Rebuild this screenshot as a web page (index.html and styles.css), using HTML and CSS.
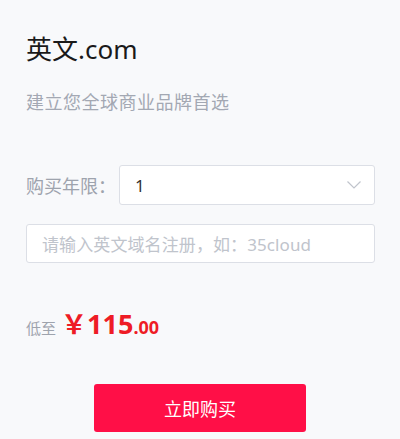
FILE: index.html
```html
<!DOCTYPE html>
<html lang="zh">
<head>
<meta charset="utf-8">
<title>英文.com</title>
<link rel="stylesheet" href="styles.css">
</head>
<body>
<div class="card">
  <h1 class="title">英文.com</h1>
  <p class="subtitle">建立您全球商业品牌首选</p>
  <div class="row">
    <span class="label">购买年限：</span>
    <div class="select">
      <span class="value">1</span>
      <svg class="chev" width="14" height="8" viewBox="0 0 14 8"><path d="M0.5 0.5 L7 7 L13.5 0.5" fill="none" stroke="#c0c4cc" stroke-width="1.2"/></svg>
    </div>
  </div>
  <div class="input"><span class="placeholder">请输入英文域名注册，如：35cloud</span></div>
  <div class="price">
    <span class="low">低至</span>
    <span class="yen">￥</span><span class="int">115</span><span class="dec">.00</span>
  </div>
  <div class="actions"><button class="buy">立即购买</button></div>
</div>
</body>
</html>
```
FILE: styles.css
```css
html, body {
  margin: 0;
  padding: 0;
  background: #f8f9fb;
}
body {
  width: 400px;
  height: 439px;
  overflow: hidden;
  font-family: "Noto Sans", "Noto Sans CJK SC", sans-serif;
}
.card {
  padding: 31px 25px 0 26px;
}
.title {
  margin: 0;
  font-size: 26px;
  line-height: 36px;
  font-weight: 400;
  color: #1a1a1a;
}
.subtitle {
  margin: 22px 0 0;
  font-size: 18px;
  line-height: 26px;
  color: #a3a8b3;
  letter-spacing: 0.5px;
}
.row {
  margin-top: 50px;
  display: flex;
  align-items: center;
}
.label {
  width: 93px;
  font-size: 18px;
  color: #9ea3ad;
  white-space: nowrap;
}
.select {
  flex: 1;
  height: 40px;
  box-sizing: border-box;
  border: 1px solid #dcdfe6;
  border-radius: 3px;
  background: #fff;
  display: flex;
  align-items: center;
  justify-content: space-between;
  padding: 0 13px 0 15px;
}
.value {
  font-size: 17px;
  color: #333;
}
.chev {
  display: block;
}
.input {
  margin-top: 19px;
  height: 39px;
  box-sizing: border-box;
  border: 1px solid #dcdfe6;
  border-radius: 3px;
  background: #fff;
  display: flex;
  align-items: center;
  padding-left: 15px;
}
.placeholder {
  font-size: 17px;
  color: #c0c4cc;
  white-space: nowrap;
  letter-spacing: 0.1px;
}
.price {
  margin-top: 44px;
  height: 34px;
  display: flex;
  align-items: baseline;
  color: #ee1c25;
  font-weight: 700;
  line-height: 34px;
}
.low {
  font-size: 15px;
  font-weight: 400;
  color: #9ea3ad;
  margin-right: 5px;
}
.yen {
  font-size: 26px;
}
.int {
  font-size: 27px;
}
.dec {
  font-size: 18px;
}
.actions {
  margin-top: 43px;
  display: flex;
  justify-content: center;
  margin-left: -26px;
  margin-right: -25px;
}
.buy {
  width: 212px;
  height: 48px;
  border: 0;
  border-radius: 3px;
  background: #ff0f47;
  color: #fff;
  font-family: "Noto Sans", "Noto Sans CJK SC", sans-serif;
  font-size: 18px;
  padding: 0;
}
```
